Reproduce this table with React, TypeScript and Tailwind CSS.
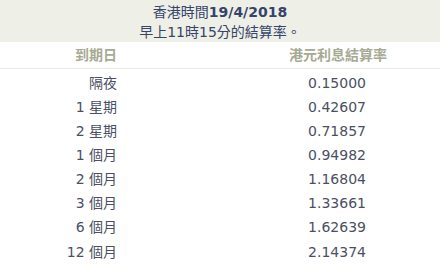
const rows: [string, string][] = [
  ["隔夜", "0.15000"],
  ["1 星期", "0.42607"],
  ["2 星期", "0.71857"],
  ["1 個月", "0.94982"],
  ["2 個月", "1.16804"],
  ["3 個月", "1.33661"],
  ["6 個月", "1.62639"],
  ["12 個月", "2.14374"],
]

export default function App() {
  return (
    <div className="w-[440px] h-[274px] bg-white text-[14px] font-['DejaVu_Sans','Noto_Sans_CJK_TC',sans-serif]">
      <div className="h-[42px] bg-[#eef0e7] pt-[2px] text-center leading-[20px] text-[#36446a]">
        <div>
          香港時間<span className="font-bold">19/4/2018</span>
        </div>
        <div>早上11時15分的結算率。</div>
      </div>

      <div className="grid grid-cols-[192px_1fr] h-[27px] items-center border-b border-[#e9eae2] font-bold text-[#a7aa92]">
        <div className="text-center">到期日</div>
        <div className="text-right pr-[53px]">港元利息結算率</div>
      </div>

      <div className="pt-[2px] text-[#4a4f63]">
        {rows.map(([term, rate]) => (
          <div key={term} className="grid grid-cols-[192px_1fr] h-[24.15px] items-center">
            <div className="text-right pr-[75px]">{term}</div>
            <div className="text-right pr-[74px]">{rate}</div>
          </div>
        ))}
      </div>
    </div>
  )
}
